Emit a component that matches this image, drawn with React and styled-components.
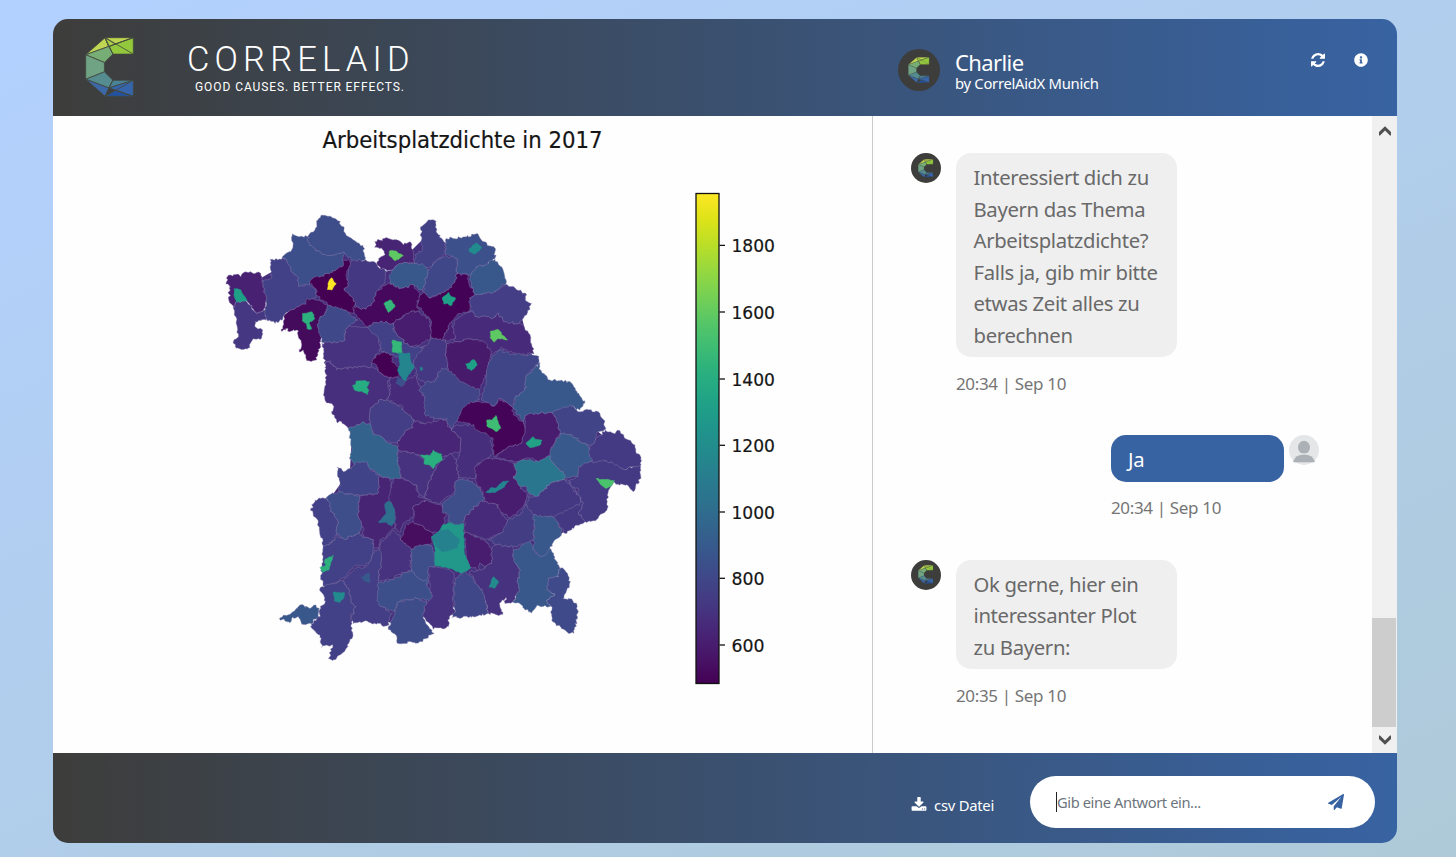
import React from 'react';
import styled, { createGlobalStyle } from 'styled-components';
import { FaInfoCircle } from 'react-icons/fa';

const uiFont = '"Segoe UI", "Noto Sans", "Open Sans", sans-serif';
const barGradient = 'linear-gradient(90deg, #3d3d3b 0%, #3863a2 100%)';

const GlobalStyle = createGlobalStyle`
  * { box-sizing: border-box; }
  html, body { margin: 0; height: 100%; overflow: hidden; }
  body {
    font-family: ${uiFont};
    background: linear-gradient(155deg, #b3d1ff 0%, #aecad8 100%) no-repeat;
    background-size: 1456px 857px;
  }
`;

const Window = styled.main`
  width: 1344px;
  height: 824px;
  margin: 19px 0 0 53px;
  display: flex;
  flex-direction: column;
  border-radius: 15px;
  overflow: hidden;
`;

const Header = styled.header`
  height: 97px;
  flex: none;
  display: grid;
  grid-template-columns: 845px 1fr auto;
  background: ${barGradient};
  color: #fff;
`;

const Brand = styled.div`
  display: flex;
  align-items: flex-start;
  gap: 53px;
  padding: 18px 0 0 32px;
`;

const Profile = styled.div`
  display: flex;
  gap: 15px;
  padding-top: 30px;
`;

const ProfileText = styled.div`
  display: flex;
  flex-direction: column;
`;

const BotName = styled.div`
  font-size: 22px;
  line-height: 26px;
  letter-spacing: -0.6px;
`;

const BotOrg = styled.div`
  font-size: 14.8px;
  line-height: 16px;
  letter-spacing: -0.28px;
`;

const HeaderActions = styled.div`
  display: flex;
  gap: 29px;
  padding: 34px 29px 0 0;
`;

const IconButton = styled.button`
  display: flex;
  width: ${(p) => p.$size || 14}px;
  height: ${(p) => p.$size || 14}px;
  padding: 0;
  border: 0;
  background: none;
  color: ${(p) => p.$color || '#fff'};
`;

const AvatarDisc = styled.div`
  width: ${(p) => p.$size}px;
  height: ${(p) => p.$size}px;
  flex: none;
  display: flex;
  align-items: center;
  justify-content: center;
  border-radius: 50%;
  background: #3d3d3b;
`;

const Content = styled.div`
  flex: 1;
  min-height: 0;
  display: grid;
  grid-template-columns: 819px 1fr 25px;
  background: #fefefe;
`;

const PlotPane = styled.section`
  overflow: hidden;
`;

const ChatPane = styled.section`
  display: flex;
  flex-direction: column;
  padding: 37px 53px 0 38px;
  border-left: 1px solid #c9cbcd;
`;

const Message = styled.article`
  display: flex;
  justify-content: ${(p) => (p.$own ? 'flex-end' : 'flex-start')};
  gap: ${(p) => (p.$own ? 5 : 15)}px;
  margin-bottom: ${(p) => p.$after || 0}px;
`;

const Bubble = styled.div`
  width: ${(p) => (p.$own ? 173 : 221)}px;
  padding: 9px 0 6px ${(p) => (p.$own ? 17 : 17.5)}px;
  border-radius: 15px;
  background: ${(p) => (p.$own ? '#3863a2' : '#efefef')};
  color: ${(p) => (p.$own ? '#fff' : '#696969')};
  font-size: 20.3px;
  line-height: 31.5px;
  letter-spacing: -0.33px;
  white-space: pre-line;
`;

const Stamp = styled.time`
  display: block;
  margin-top: ${(p) => (p.$own ? 13 : 14)}px;
  margin-bottom: ${(p) => (p.$own ? 1 : 0)}px;
  font-size: 17px;
  line-height: 26px;
  letter-spacing: -0.35px;
  color: #757575;
`;

const ScrollTrack = styled.div`
  display: flex;
  flex-direction: column;
  align-items: center;
  background: #f0f0f0;
`;

const ScrollThumb = styled.div`
  width: 24px;
  height: 109px;
  margin: auto 1px 0 0;
  background: #cdcdcd;
`;

const ScrollButton = styled.div`
  height: ${(p) => p.$height}px;
  display: flex;
  align-items: center;
`;

const Footer = styled.footer`
  height: 90px;
  flex: none;
  display: flex;
  align-items: center;
  justify-content: flex-end;
  gap: 36px;
  padding: 8px 22px 0 0;
  background: ${barGradient};
`;

const Download = styled.a`
  display: flex;
  align-items: center;
  gap: 7px;
  padding-top: 5px;
  color: #fff;
  font-size: 14.8px;
  line-height: 20px;
  letter-spacing: -0.25px;
`;

const Composer = styled.div`
  width: 345px;
  height: 52px;
  display: flex;
  align-items: center;
  justify-content: space-between;
  padding: 0 31px 0 26px;
  border-radius: 26px;
  background: #fff;
`;

const Placeholder = styled.div`
  height: 20px;
  border-left: 1px solid #222;
  color: #6c757d;
  font-size: 14.7px;
  line-height: 20px;
  letter-spacing: -0.4px;
`;

/* ---------- brand mark ---------- */

const markFaces = [
  ['#bfd652', '57,0 0,51 68,26'],
  ['#bdd550', '57,0 140,0 87,19 68,27'],
  ['#93c83d', '140,0 140,49 80,49 68,26'],
  ['#a8cf45', '57,0 87,19 68,27'],
  ['#77ae75', '0,51 68,26 80,49 55,74'],
  ['#6fa384', '0,51 55,74 55,102 0,124'],
  ['#548c8f', '0,124 55,102 80,127 68,150'],
  ['#4a8296', '80,127 140,127 68,150'],
  ['#3c68a8', '0,124 68,150 57,175'],
  ['#3765ac', '140,127 140,175 68,150'],
  ['#2352a0', '57,175 140,175 87,157'],
];
const markLines = 'M57 0L140 49M140 0L68 26M57 0L80 49M140 127L57 175M68 150L140 175M80 127L57 175';

function Mark({ width, height, line = 2.4 }) {
  return (
    <svg width={width} height={height} viewBox="-2 -2 144 179" preserveAspectRatio="none">
      <g stroke="#44493f" strokeWidth={line} strokeLinejoin="round">
        {markFaces.map(([fill, points]) => (
          <polygon key={points} fill={fill} points={points} />
        ))}
        <path d={markLines} fill="none" />
      </g>
    </svg>
  );
}

function Wordmark() {
  return (
    <svg width="226" height="60" viewBox="0 0 226 60" fill="#fff" fontFamily="Roboto, sans-serif">
      <text x="0" y="33.500" fontSize="34.500" fontWeight="300" textLength="222.500" lengthAdjust="spacing">CORRELAID</text>
      <text x="8" y="54" fontSize="12" fontWeight="400" textLength="209" lengthAdjust="spacing">GOOD CAUSES. BETTER EFFECTS.</text>
    </svg>
  );
}

/* ---------- icons ---------- */

const RefreshIcon = () => (
  <svg width="14" height="14" viewBox="0 0 1536 1536" fill="currentColor">
    <path d="M1511 928q0 5-1 7-64 268-268 434.5t-478 166.5q-146 0-282.5-55t-243.5-157l-129 129q-19 19-45 19t-45-19-19-45v-448q0-26 19-45t45-19h448q26 0 45 19t19 45-19 45l-137 137q71 66 161 102t187 36q134 0 250-65t186-179q11-17 53-117 8-23 30-23h192q13 0 22.5 9.5t9.5 22.5zm25-800v448q0 26-19 45t-45 19h-448q-26 0-45-19t-19-45 19-45l138-138q-148-137-349-137-134 0-250 65t-186 179q-11 17-53 117-8 23-30 23h-199q-13 0-22.5-9.5t-9.5-22.5v-7q65-268 270-434.5t480-166.5q146 0 284 55.5t245 156.5l130-129q19-19 45-19t45 19 19 45z" />
  </svg>
);

const DownloadIcon = () => (
  <svg width="16" height="16" viewBox="0 0 1792 1792" fill="currentColor">
    <path d="M1344 1344q0-26-19-45t-45-19-45 19-19 45 19 45 45 19 45-19 19-45zm256 0q0-26-19-45t-45-19-45 19-19 45 19 45 45 19 45-19 19-45zm128-224v320q0 40-28 68t-68 28h-1472q-40 0-68-28t-28-68v-320q0-40 28-68t68-28h465l135 136q58 56 136 56t136-56l136-136h464q40 0 68 28t28 68zm-325-569q17 41-14 70l-448 448q-18 19-45 19t-45-19l-448-448q-31-29-14-70 17-39 59-39h256v-448q0-26 19-45t45-19h256q26 0 45 19t19 45v448h256q42 0 59 39z" />
  </svg>
);

const SendIcon = () => (
  <svg width="16" height="16" viewBox="0 0 1792 1792" fill="currentColor">
    <path d="M1764 11q33 24 27 64l-256 1536q-5 29-32 45-14 8-31 8-11 0-24-5l-453-185-242 295q-18 23-49 23-13 0-22-4-19-7-30.500-23.500t-11.500-36.500v-349l864-1059-1069 925-395-162q-37-14-40-55-2-40 32-59l1664-960q15-9 32-9 20 0 36 11z" />
  </svg>
);

const Chevron = ({ down }) => (
  <svg width="12" height="10" viewBox="0 0 12 10" fill="#505050">
    <path d={down ? 'M0 0.500H1L6 5.500L11 0.500H12V4L6 9.700L0 4Z' : 'M0 9.500H1L6 4.500L11 9.500H12V6L6 0.300L0 6Z'} />
  </svg>
);

const UserAvatar = () => (
  <svg width="30" height="30" viewBox="0 0 30 30">
    <circle cx="15" cy="15" r="15" fill="#e4e6e7" />
    <ellipse cx="15" cy="12.300" rx="6" ry="6.500" fill="#abb1b6" />
    <path d="M4 26.500Q6.500 19.500 15 19.500Q23.500 19.500 26 26.500Q25.500 27.300 24.800 27.300H5.200Q4.500 27.300 4 26.500Z" fill="#abb1b6" />
    <path d="M9.500 19.300Q15 17.800 20.500 19.300" fill="none" stroke="#e4e6e7" strokeWidth="0.800" />
  </svg>
);

/* ---------- choropleth ---------- */

/* Districts are grouped by map sheet; a sheet has its own origin and is drawn at three units per pixel. */
const sheets = [
  {
    origin: [220, 205],
    areas: [
      ['#3c4f8a', '218,87 240,95 262,95 270,122 310,148 345,150 372,140 370,165 365,185 345,198 320,205 310,215 275,220 268,243 250,240 235,243 232,215 212,190 200,165 188,155 215,135'],
      ['#3d4e8a', '308,30 345,40 370,65 380,92 400,105 430,122 434,165 415,172 395,168 372,140 345,150 310,148 270,122 262,95 285,75 293,45'],
      ['#424086', '150,163 185,163 188,155 200,165 212,190 232,215 235,243 268,240 285,250 288,278 262,285 258,298 235,305 205,320 190,335 185,345 165,355 150,345 140,345 132,320 138,285 125,225 155,220'],
      ['#482173', '18,238 22,215 55,208 62,215 75,200 122,205 127,225 138,285 132,312 110,325 100,312 90,300 78,285 50,290 40,308 28,290 27,240'],
      ['#453781', '40,308 50,290 78,288 90,300 110,325 132,312 138,345 105,350 105,365 128,375 125,400 100,402 85,430 50,430 40,410 55,395 50,340 42,330'],
      ['#453882', '395,168 434,165 465,172 480,190 500,198 495,230 470,260 460,290 438,312 420,310 405,300 405,290 372,250 385,240 383,225 385,200 392,180'],
      ['#440154', '272,225 290,215 310,215 320,205 345,198 365,185 370,165 390,168 392,180 380,200 380,225 385,240 372,250 405,290 400,325 380,318 345,312 322,298 305,285 290,270 290,255 272,235'],
      ['#440a5c', '258,285 262,280 290,285 322,298 315,325 295,345 295,370 305,385 300,430 292,445 290,465 260,467 250,435 238,440 245,420 230,375 208,380 205,370 185,380 192,335 205,320 235,305 258,298'],
      ['#3f4889', '345,305 380,318 395,335 415,345 390,362 375,375 372,408 335,415 305,410 295,370 295,345 315,325 325,300'],
    ],
    cities: [
      ['#1fa187', '42,250 62,255 70,270 82,286 50,291 43,275'],
      ['#fde725', '334,218 349,235 336,255 322,254 324,235'],
      ['#2cb17e', '248,326 277,320 284,340 268,355 275,373 261,372 258,355 247,348'],
    ],
  },
  {
    origin: [360, 205],
    areas: [
      ['#482475', '45,110 75,100 110,105 130,120 150,110 155,130 160,155 165,178 140,172 115,178 95,195 60,192 50,172 62,155 75,150 65,130 45,128'],
      ['#424186', '182,65 205,45 228,50 228,80 245,100 258,125 250,150 230,165 215,185 195,190 165,178 165,150 185,140 185,100'],
      ['#3c508b', '258,100 300,98 355,88 368,110 405,130 405,160 375,180 355,185 330,210 290,208 290,160 258,150 258,125'],
      ['#38588c', '115,178 140,172 190,180 205,195 195,225 190,258 160,240 125,250 90,235 88,215 95,195'],
      ['#3f4788', '258,152 290,160 290,208 285,230 265,255 245,262 220,272 212,280 190,262 195,225 205,195 230,165'],
      ['#38588c', '405,162 425,185 440,230 400,262 345,268 335,240 330,210 355,185 375,180'],
      ['#440256', '290,208 322,210 328,240 345,268 328,280 332,318 300,325 275,350 260,375 250,405 225,408 212,390 212,345 190,320 170,300 180,270 190,262 212,280 245,262 265,255 285,230'],
      ['#46085c', '85,232 90,238 125,250 160,240 180,265 170,300 178,320 150,322 110,345 100,355 60,350 35,358 22,365 0,345 -15,325 -20,305 0,310 18,312 40,290 50,260'],
      ['#481c6e', '150,322 178,320 210,345 212,400 180,420 150,425 125,400 102,380 105,350'],
      ['#433e85', '345,268 400,262 440,238 460,245 500,270 495,285 515,295 500,330 478,355 435,352 415,325 400,338 345,335 330,310 328,280'],
      ['#472a7a', '285,345 332,318 345,335 400,338 415,325 435,352 478,355 510,390 522,445 480,450 450,440 425,428 390,450 370,410 320,402 285,410 278,370'],
      ['#481a6c', '258,440 262,415 285,410 320,402 370,410 395,440 385,490 370,525 355,555 345,565 300,540 265,500 260,470'],
      ['#482173', '260,375 275,352 285,400 262,410 250,405'],
      ['#453882', '165,440 200,422 212,400 250,405 262,415 258,440 262,495 235,505 225,530 195,535 175,520 160,480'],
      ['#424086', '15,370 45,352 60,350 100,355 102,380 125,400 150,425 190,425 165,460 155,480 120,460 95,450 65,440 60,410 20,380'],
    ],
    cities: [
      ['#5ec962', '88,138 108,138 130,152 105,168 88,152'],
      ['#228b8d', '328,130 350,113 367,128 345,148 328,140'],
      ['#1fa187', '246,278 255,272 265,262 272,274 288,280 280,290 272,302 262,295 252,297'],
      ['#35b779', '72,296 92,284 106,305 85,322'],
      ['#5ec962', '392,378 415,374 430,392 442,405 415,400 402,412 390,398'],
    ],
  },
  {
    origin: [310, 350],
    areas: [
      ['#46327e', '40,0 35,-20 102,-27 105,-60 120,-73 150,-70 175,-65 205,-35 213,-5 190,25 185,50 100,55 80,60 60,32 45,40'],
      ['#472f7d', '45,40 60,32 80,60 100,55 185,50 205,65 240,82 232,100 242,125 230,150 210,148 180,180 180,220 155,220 135,230 115,235 95,215 80,215 65,185 72,170 45,150 42,120 48,90'],
      ['#472a7a', '240,82 262,80 275,108 285,95 315,75 325,105 345,150 370,200 372,222 345,222 312,210 290,190 270,165 232,150 242,125'],
      ['#414487', '395,55 425,65 450,95 510,120 508,150 475,165 455,185 440,215 425,240 410,205 380,205 345,195 345,140 325,120 350,95 375,95'],
      ['#433e85', '180,180 210,148 230,150 270,170 290,190 312,210 305,235 285,245 262,280 225,270 210,258 190,250 180,220'],
      ['#33638d', '115,235 155,218 180,222 190,255 210,258 225,270 262,290 265,345 272,375 265,390 240,388 210,375 180,355 170,340 135,345 118,325 125,290'],
      ['#482576', '262,280 285,245 305,235 312,212 345,222 372,215 400,205 425,240 450,262 450,305 420,312 395,320 370,308 340,318 310,308 265,300'],
      ['#46327e', '265,305 310,308 340,325 368,355 378,350 370,375 355,400 345,440 325,435 320,405 275,385 265,345'],
      ['#472a7a', '395,330 420,310 440,330 445,385 435,400 432,430 400,450 385,462 345,445 355,400 370,375 378,350'],
      ['#472e7c', '425,240 440,225 490,225 510,230 540,260 550,310 530,330 500,345 495,385 445,385 440,330 450,305 450,262'],
      ['#404387', '80,352 100,365 125,355 140,335 170,335 180,355 210,378 205,430 150,437 110,430 88,425 88,385'],
      ['#440154', '190,25 215,8 250,15 245,35 270,55 262,80 240,82 205,65 200,45 187,40'],
    ],
    cities: [
      ['#1fa187', '466,42 480,38 490,28 502,45 485,62 472,55'],
      ['#35b779', '247,-30 275,-23 275,10 247,7'],
      ['#25858e', '265,8 300,10 302,30 312,50 300,70 285,95 270,75 262,60 270,40'],
      ['#3c508b', '263,80 287,95 275,110 258,100'],
      ['#25858e', '332,50 338,54 334,62 330,58'],
      ['#26ad81', '127,108 136,104 138,94 158,92 178,96 170,112 176,122 172,134 155,124 136,122'],
      ['#2ab07f', '331,315 362,316 370,300 382,308 395,312 396,330 378,343 370,357 360,344 342,342 345,328'],
    ],
  },
  {
    origin: [270, 500],
    areas: [
      ['#3d4e8a', '170,-10 205,-25 230,-18 268,-13 265,50 278,80 268,98 222,118 200,100 205,65 185,35 175,10'],
      ['#424086', '135,0 170,-10 185,35 205,65 200,100 185,130 160,138 148,90 140,55 122,32'],
      ['#482475', '268,-13 325,-20 330,-72 360,-62 370,-20 360,20 375,40 372,85 362,95 350,110 328,120 325,145 310,140 310,118 280,112 278,80 265,50'],
      ['#482475', '370,-62 395,-65 440,-45 445,-10 470,0 430,20 430,50 400,70 390,98 375,85 375,40 355,-10'],
      ['#424086', '160,138 185,130 200,103 222,118 268,98 280,112 308,118 312,145 300,185 285,200 262,195 240,210 218,235 190,250 160,258 152,235 158,180'],
      ['#424086', '148,270 165,255 190,250 218,242 235,265 245,310 258,320 242,355 248,410 215,462 190,480 175,475 188,435 155,442 150,405 125,385 122,370 150,350 150,320 165,310 160,285'],
      ['#38588c', '28,355 60,342 75,330 90,315 120,325 135,315 148,325 145,350 122,370 95,373 85,350 65,355 60,370 45,362'],
      ['#433e85', '218,242 262,200 285,203 300,185 312,150 335,150 335,180 325,240 325,300 335,320 368,340 352,378 320,372 285,362 250,370 245,352 258,320 245,310 235,265'],
      ['#46327e', '328,135 352,110 368,92 390,105 392,120 425,145 420,195 425,210 380,225 370,240 325,240 335,180'],
      ['#481a6c', '430,20 470,0 515,15 528,35 525,65 515,95 488,98 450,75 430,65'],
      ['#470e60', '405,75 430,65 450,75 488,98 485,130 450,140 425,148 392,120 400,100'],
      ['#3d4e8a', '425,148 450,135 485,135 492,165 495,200 475,210 472,260 435,230 425,210'],
      ['#3c4f8a', '325,248 370,240 425,210 440,230 470,245 475,262 492,290 490,305 440,295 400,300 382,310 375,335 335,320 320,300'],
      ['#3e4d8a', '385,305 440,295 470,302 470,315 460,340 465,365 492,400 460,418 445,430 420,425 382,430 378,405 355,388 370,350 375,335'],
    ],
    cities: [
      ['#2e6f8e', '345,10 360,3 373,25 376,60 366,80 350,68 325,68 340,50 348,42'],
      ['#2cb17e', '165,178 190,166 184,185 176,210 160,217 150,203 165,198'],
      ['#238a8d', '190,276 224,278 222,292 210,307 193,302'],
      ['#38598c', '273,232 297,218 300,246 285,245'],
    ],
  },
  {
    origin: [430, 500],
    areas: [
      ['#46327e', '-5,210 0,200 60,210 72,225 70,310 75,340 58,350 55,380 10,388 -20,350 -18,320 8,290 0,265'],
      ['#3f4788', '75,235 105,215 125,230 160,280 175,340 125,352 65,352 75,330 70,300'],
      ['#3d4e8a', '38,10 75,-20 75,-50 90,-62 120,-55 140,-45 165,-5 155,5 125,30 105,50 100,72 75,75 55,65 52,40 40,40'],
      ['#472a7a', '105,50 125,30 155,3 200,12 215,40 232,60 220,100 200,105 165,118 130,105 103,98'],
      ['#481d6f', '103,98 130,105 165,120 185,145 185,190 165,205 150,188 145,210 120,200 108,165'],
      ['#453882', '285,15 290,-10 320,-30 360,-50 415,-60 430,-40 445,-15 460,10 445,40 468,65 440,75 425,90 405,100 385,70 355,48 315,40'],
      ['#433d84', '232,60 270,45 290,15 310,35 315,50 312,110 300,130 250,140 200,135 175,120 200,105 220,95'],
      ['#46327e', '185,145 200,135 250,140 252,180 272,210 262,240 268,270 250,305 225,310 228,292 208,310 218,345 175,340 160,280 130,235 118,215 145,210 165,205 185,190'],
      ['#38588c', '250,150 300,125 315,155 330,168 345,165 350,145 358,140 388,200 385,230 355,235 352,270 375,285 350,300 365,320 320,318 305,338 285,330 272,312 250,308 268,270 262,240 272,210 252,185'],
      ['#38588c', '312,45 345,45 375,55 395,90 395,105 375,120 358,145 348,165 330,168 312,150'],
      ['#3e4a89', '388,200 405,210 422,245 400,295 425,298 440,310 445,335 432,400 415,400 365,360 365,320 350,300 375,285 352,270 355,235 385,230'],
    ],
    cities: [
      ['#21988a', '38,75 60,68 75,75 100,72 103,160 122,205 95,220 60,205 15,195 15,140 5,110 30,92'],
      ['#26818e', '5,115 30,92 55,88 65,100 88,120 80,145 35,155 20,140'],
      ['#238a8d', '190,230 205,245 196,264 178,262'],
    ],
  },
  {
    origin: [470, 350],
    areas: [
      ['#404588', '90,0 125,12 205,18 207,38 195,50 170,75 165,120 135,145 125,170 90,145 75,168 35,150 45,110 50,60 65,20'],
      ['#38588c', '210,38 210,60 240,90 275,90 305,100 345,160 330,180 300,168 245,188 200,190 170,195 160,215 130,175 135,145 165,120 170,75 195,55'],
      ['#414487', '245,188 300,165 330,185 350,178 385,185 405,215 405,238 378,250 375,280 355,285 330,275 305,255 268,250 265,225'],
      ['#481c6e', '165,195 200,190 245,188 265,225 270,250 245,290 240,320 205,335 180,325 130,335 75,322 110,295 155,280 165,235'],
      ['#440558', '0,155 30,155 75,168 88,145 125,170 130,195 160,215 165,235 155,280 110,295 70,320 70,265 30,245 0,220 -40,215 -25,180'],
      ['#38598c', '270,252 305,255 330,275 355,285 365,335 330,350 325,380 290,385 270,360 245,335 240,305 250,285'],
      ['#443983', '300,390 325,380 325,350 365,335 400,330 430,335 460,357 510,345 512,380 490,425 470,405 450,405 430,395 415,425 410,480 380,510 345,515 325,490 340,460 325,435 325,415 305,410'],
      ['#443a83', '405,238 430,250 450,242 465,265 495,285 500,310 513,322 510,348 460,357 430,340 400,330 370,340 358,310 358,290 375,275'],
      ['#453882', '175,440 205,438 240,400 285,388 305,410 325,435 330,460 250,500 190,495 170,465'],
      ['#2a768e', '130,340 160,328 205,335 238,315 245,335 285,375 285,388 240,400 205,438 175,430 170,410 145,410 130,385 140,365'],
      ['#481d6f', '15,350 45,330 75,325 130,340 140,365 130,385 145,405 170,430 165,460 140,490 115,503 90,480 85,462 45,455 40,425 20,400'],
    ],
    cities: [
      ['#3fbc73', '50,210 66,210 78,196 84,212 92,235 78,245 62,234 50,228'],
      ['#22a187', '168,280 188,260 196,268 216,270 210,285 180,294'],
      ['#4ac16d', '378,386 415,388 434,392 425,408 408,415 390,402'],
      ['#25858e', '48,427 62,412 78,414 98,394 117,393 98,415 75,428'],
    ],
  },
];

const landmass = '325,222 345,240 362,262 372,275 392,270 422,240 470,245 500,275 520,310 530,350 545,385 590,425 635,462 600,490 590,510 548,545 560,590 500,598 440,610 400,625 360,615 335,635 328,580 322,510 350,470 352,430 330,400 325,340 312,320 260,300 240,290 275,270';

const noise = (x, y, seed) => {
  const v = Math.sin(x * 12.9898 + y * 78.233 + seed * 37.719) * 43758.5453;
  return v - Math.floor(v) - 0.5;
};

/* Breaks straight borders into small irregular steps, the same on both sides of a border. */
function roughen(points, [ox, oy], strength = 2.5) {
  const list = points.split(' ').map((pair) => {
    const [x, y] = pair.split(',').map(Number);
    return [ox + x / 3, oy + y / 3];
  });
  const out = [];
  list.forEach(([x1, y1], i) => {
    const [x2, y2] = list[(i + 1) % list.length];
    const steps = Math.max(1, Math.round(Math.hypot(x2 - x1, y2 - y1) / 1.9));
    for (let s = 0; s < steps; s += 1) {
      const x = x1 + ((x2 - x1) * s) / steps;
      const y = y1 + ((y2 - y1) * s) / steps;
      const kx = Math.round(x * 1.5);
      const ky = Math.round(y * 1.5);
      const amount = s === 0 ? 0.5 : strength;
      out.push(`${(x + noise(kx, ky, 1) * amount).toFixed(1)},${(y + noise(kx, ky, 2) * amount).toFixed(1)}`);
    }
  });
  return out.join(' ');
}

const ticks = [
  [1800, 245.3], [1600, 312], [1400, 379], [1200, 445.3], [1000, 512], [800, 578.3], [600, 645],
];
const viridis = ['#fde725', '#dde318', '#bade28', '#95d840', '#75d054', '#56c667', '#3dbc74', '#29af7f', '#20a386', '#1f968b', '#238a8d', '#287d8e', '#2d718e', '#33638d', '#39558c', '#404688', '#453781', '#482576', '#481467', '#440154'];

const PlotText = styled.text`
  fill: #151515;
  stroke: #151515;
  stroke-width: 0.2px;
`;

function DensityPlot() {
  return (
    <svg width="819" height="637" viewBox="53 116 819 637" fontFamily="DejaVu Sans, sans-serif">
      <defs>
        <linearGradient id="viridis" x1="0" y1="0" x2="0" y2="1">
          {viridis.map((c, i) => (
            <stop key={c} offset={i / (viridis.length - 1)} stopColor={c} />
          ))}
        </linearGradient>
      </defs>
      <PlotText x="322.500" y="147.500" fontSize="23" textLength="280" lengthAdjust="spacingAndGlyphs">
        Arbeitsplatzdichte in 2017
      </PlotText>
      <polygon points={landmass} fill="#46307d" />
      <g stroke="#8d84b0" strokeOpacity="0.55" strokeWidth="0.7" strokeLinejoin="round">
        {sheets.map(({ origin, areas }) =>
          areas.map(([fill, points]) => (
            <polygon key={points} fill={fill} points={roughen(points, origin)} />
          )),
        )}
      </g>
      {sheets.map(({ origin, cities }) =>
        cities.map(([fill, points]) => (
          <polygon key={points} fill={fill} stroke={fill} strokeWidth="0.5" points={roughen(points, origin, 1.2)} />
        )),
      )}
      <rect x="696" y="193.500" width="23" height="490" fill="url(#viridis)" stroke="#111" strokeWidth="1.300" />
      {ticks.map(([value, y]) => (
        <g key={value}>
          <path d={`M719.5 ${y}h5.5`} stroke="#111" strokeWidth="1.300" />
          <PlotText x="731.500" y={y + 7} fontSize="17.500" textLength={value > 999 ? 43.5 : 33} lengthAdjust="spacingAndGlyphs">
            {value}
          </PlotText>
        </g>
      ))}
    </svg>
  );
}

/* ---------- page ---------- */

const BotAvatar = ({ size }) => (
  <AvatarDisc $size={size}>
    <Mark width={size * 0.51} height={size * 0.62} line={1.5} />
  </AvatarDisc>
);

const messages = [
  {
    text: 'Interessiert dich zu\nBayern das Thema\nArbeitsplatzdichte?\nFalls ja, gib mir bitte\netwas Zeit alles zu\nberechnen',
    time: '20:34 | Sep 10',
    after: 38,
  },
  { own: true, text: 'Ja', time: '20:34 | Sep 10', after: 38 },
  { text: 'Ok gerne, hier ein\ninteressanter Plot\nzu Bayern:', time: '20:35 | Sep 10' },
];

export default function App() {
  return (
    <>
      <GlobalStyle />
      <Window>
        <Header>
          <Brand>
            <Mark width={49} height={60} />
            <Wordmark />
          </Brand>
          <Profile>
            <BotAvatar size={42} />
            <ProfileText>
              <BotName>Charlie</BotName>
              <BotOrg>by CorrelAidX Munich</BotOrg>
            </ProfileText>
          </Profile>
          <HeaderActions>
            <IconButton aria-label="Neu starten"><RefreshIcon /></IconButton>
            <IconButton aria-label="Info"><FaInfoCircle size={14} /></IconButton>
          </HeaderActions>
        </Header>
        <Content>
          <PlotPane><DensityPlot /></PlotPane>
          <ChatPane>
            {messages.map((m) => (
              <Message key={m.text} $own={m.own} $after={m.after}>
                {!m.own && <BotAvatar size={30} />}
                <div>
                  <Bubble $own={m.own}>{m.text}</Bubble>
                  <Stamp $own={m.own}>{m.time}</Stamp>
                </div>
                {m.own && <UserAvatar />}
              </Message>
            ))}
          </ChatPane>
          <ScrollTrack>
            <ScrollButton $height={29}><Chevron /></ScrollButton>
            <ScrollThumb />
            <ScrollButton $height={26}><Chevron down /></ScrollButton>
          </ScrollTrack>
        </Content>
        <Footer>
          <Download><DownloadIcon />csv Datei</Download>
          <Composer>
            <Placeholder>Gib eine Antwort ein...</Placeholder>
            <IconButton $color="#3863a2" $size={16} aria-label="Senden"><SendIcon /></IconButton>
          </Composer>
        </Footer>
      </Window>
    </>
  );
}
